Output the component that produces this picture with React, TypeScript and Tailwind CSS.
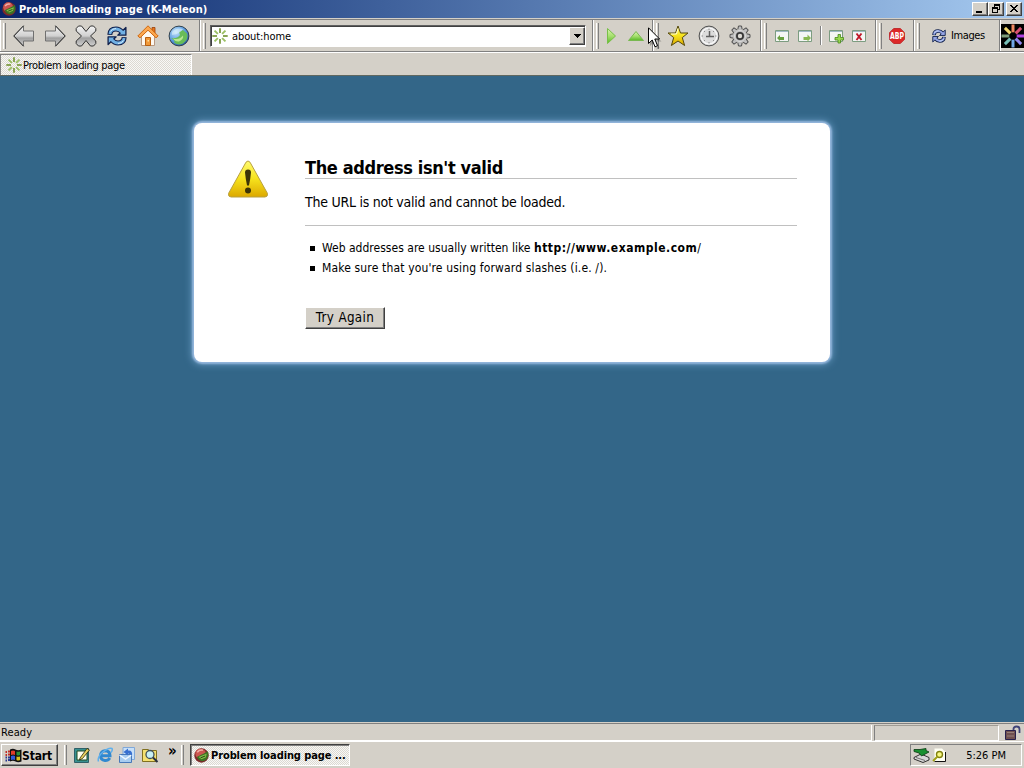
import type { ReactNode } from "react";

const UI_FONT = "font-['DejaVu_Sans_Condensed','DejaVu_Sans',sans-serif] [font-stretch:condensed]";

const DITHER = "bg-[repeating-conic-gradient(#f8f8f6_0_25%,#dcd9d2_0_50%)] bg-[length:2px_2px]";

const SPOKES = [0, 45, 90, 135, 180, 225, 270, 315];

const LOGO_COLOURS = ["#f08860", "#d85070", "#b040e0", "#9088f0", "#70a8e8", "#78c0b8", "#7c9c78", "#f0d870"];

function Grip({ className = "h-[26px]" }: { className?: string }) {
  return <div className={`w-[3px] shrink-0 border-l border-r border-l-white border-r-[#808080] bg-[#d4d0c8] ${className}`} />;
}

function Band({ className, children }: { className: string; children: ReactNode }) {
  return (
    <div className={`flex h-full shrink-0 items-center border-l border-r border-l-white border-r-[#808080] pl-[2px] ${className}`}>
      <Grip />
      {children}
    </div>
  );
}

function Cell({ className = "w-[31px]", children }: { className?: string; children: ReactNode }) {
  return <div className={`flex h-full shrink-0 items-center justify-center ${className}`}>{children}</div>;
}

// Ring of short strokes used as the page favicon
function Spinner() {
  return (
    <svg width="16" height="16" viewBox="0 0 16 16" className="shrink-0">
      {SPOKES.map((deg, i) => (
        <path
          key={deg}
          d="M8 0.3V5"
          stroke={i % 2 ? "#9abf62" : "#84a04c"}
          strokeWidth="1.9"
          transform={`rotate(${deg} 8 8)`}
        />
      ))}
    </svg>
  );
}

function KMeleonIcon({ size }: { size: number }) {
  return (
    <svg width={size} height={size} viewBox="0 0 16 16" className="shrink-0">
      <circle cx="8" cy="8" r="7.7" fill="#7c2a2a" />
      <circle cx="7" cy="6" r="5.6" fill="#cc5650" />
      <path d="M3.5 4.5Q6 1.5 9.5 2.5" stroke="#f0b0a8" strokeWidth="1.6" fill="none" />
      <path d="M3 9.5L7 7.5L10 6L14.8 3.5Q16.5 9 13 12.5Q9 15.5 5 12.5Z" fill="#3c7424" />
      <path d="M5 9.5L10 7.5L13.5 6L12.5 10L8 12Z" fill="#88c048" />
      <path d="M7 10.500L12 8.500" stroke="#1f3c14" strokeWidth="1" />
    </svg>
  );
}

function Gradients() {
  return (
    <svg width="0" height="0" className="absolute">
      <defs>
        <linearGradient id="metal" x1="0" y1="0" x2="0" y2="1">
          <stop offset="0" stopColor="#f4f4f4" />
          <stop offset="0.5" stopColor="#d0d0d0" />
          <stop offset="0.6" stopColor="#a0a0a0" />
          <stop offset="1" stopColor="#d0d0d0" />
        </linearGradient>
        <linearGradient id="green" x1="0" y1="0" x2="0" y2="1">
          <stop offset="0" stopColor="#d8f4b0" />
          <stop offset="0.5" stopColor="#a8e070" />
          <stop offset="1" stopColor="#58b828" />
        </linearGradient>
        <linearGradient id="gold" x1="0" y1="0" x2="0" y2="1">
          <stop offset="0" stopColor="#fffb70" />
          <stop offset="0.5" stopColor="#f6e21c" />
          <stop offset="1" stopColor="#dca800" />
        </linearGradient>
        <radialGradient id="globe" cx="0.35" cy="0.3" r="0.75">
          <stop offset="0" stopColor="#c4e4fc" />
          <stop offset="0.6" stopColor="#5c9ce0" />
          <stop offset="1" stopColor="#2858a8" />
        </radialGradient>
      </defs>
    </svg>
  );
}

function BackIcon() {
  return (
    <svg width="22" height="22" viewBox="0 0 22 22">
      <path d="M0.8 11L10.500 0.800V6H20.500V16H10.500V21.200Z" fill="url(#metal)" stroke="#707070" strokeLinejoin="round" />
      <path d="M10.500 0.800L0.800 11L10.500 21.200" fill="none" stroke="#303030" />
    </svg>
  );
}

function ForwardIcon() {
  return (
    <svg width="22" height="22" viewBox="0 0 22 22">
      <path d="M21.200 11L11.500 0.800V6H1.500V16H11.500V21.200Z" fill="url(#metal)" stroke="#707070" strokeLinejoin="round" />
      <path d="M11.500 0.800L21.200 11L11.500 21.200" fill="none" stroke="#303030" />
    </svg>
  );
}

function StopIcon() {
  return (
    <svg width="22" height="22" viewBox="0 0 22 22">
      <path
        d="M3.5 1H6.500L11 6.500L15.500 1H18.500L20.800 3.500V6L15.500 11L20.800 16V18.500L18.500 21H15.500L11 15.500L6.500 21H3.500L1.200 18.500V16L6.500 11L1.200 6V3.500Z"
        fill="url(#metal)"
        stroke="#303030"
        strokeLinejoin="round"
      />
    </svg>
  );
}

// Two curved arrows chasing each other: dark silhouette first, fill on top
function ReloadIcon({ size, fill }: { size: number; fill: string }) {
  return (
    <svg width={size} height={size} viewBox="0 0 20 20" className="shrink-0">
      {[0, 180].map((deg) => (
        <g key={deg} transform={`rotate(${deg} 10 10)`}>
          <path d="M2.800 8.800Q3 3 9 3Q12.500 3 15 6" fill="none" stroke="#10204c" strokeWidth="5" />
          <path d="M18.900 1.500V9.200H10.800Z" fill={fill} stroke="#10204c" strokeWidth="1.300" strokeLinejoin="round" />
          <path d="M2.900 8Q3.500 3 9 3Q12.500 3 15.500 6.500" fill="none" stroke={fill} strokeWidth="2.800" />
          <path d="M3.500 5.500Q5 2.500 9 2.500" fill="none" stroke="#dceefc" strokeWidth="0.900" />
        </g>
      ))}
    </svg>
  );
}

function HomeIcon() {
  return (
    <svg width="22" height="22" viewBox="0 0 22 22">
      <path d="M4.500 11V20.500H17.500V11L11 4Z" fill="#fdf8f0" stroke="#b89880" />
      <path d="M15 2.500H18V8L15 5Z" fill="#e87820" stroke="#984008" strokeWidth="0.800" />
      <path d="M11 0.800L0.800 11L3 12.800L11 5.200L19 12.800L21.200 11Z" fill="#fba850" stroke="#d06810" />
      <path d="M8.500 12.500H13.500V20.500H8.500Z" fill="#f09838" stroke="#b86010" />
      <path d="M10.500 15H12V16.500H10.500Z" fill="#ffe0a0" />
    </svg>
  );
}

function GlobeIcon() {
  return (
    <svg width="22" height="22" viewBox="0 0 22 22">
      <circle cx="11" cy="11" r="9.900" fill="url(#globe)" stroke="#30404c" />
      <path d="M3 13Q9 14 12 10L11 7L15 5L19 8.500Q21 14 15 18.500Q10 21 6 17.500Q8 16 3 13Z" fill="#68bc58" />
      <path d="M5 13.500Q11 15.500 15 10.500Q16 14 11 16.500Q7 17 5 13.500Z" fill="#b8e890" />
      <path d="M4 7Q8 2 15 4Q12 9 4 10Z" fill="#e0f4fc" opacity="0.550" />
    </svg>
  );
}

function StarIcon() {
  return (
    <svg width="22" height="22" viewBox="0 0 22 22">
      <path
        d="M11 1L13.500 8H21L15.300 12.600L17.600 20.500L11 16L4.400 20.500L6.700 12.600L1 8H8.500Z"
        fill="url(#gold)"
        stroke="#54480c"
        strokeLinejoin="round"
      />
      <path d="M11 3.500L9.500 9H4" stroke="#fffde0" fill="none" />
    </svg>
  );
}

function ClockIcon() {
  return (
    <svg width="22" height="22" viewBox="0 0 22 22">
      <circle cx="11" cy="11" r="9.900" fill="#c4c4c4" stroke="#505050" />
      <circle cx="11" cy="11" r="8" fill="#dcdcdc" stroke="#f8f8f8" strokeWidth="1.500" />
      <path d="M11 3.500V5M11 17V18.500M3.500 11H5M17 11H18.500M6 6L7 7M16 6L15 7M6 16L7 15M16 16L15 15" stroke="#909090" />
      <path d="M11.500 6V12M8 11.500H16" stroke="#606060" strokeWidth="1.500" />
    </svg>
  );
}

function GearIcon() {
  return (
    <svg width="22" height="22" viewBox="0 0 22 22">
      {SPOKES.map((deg) => (
        <path key={deg} d="M8.800 4.500L9.500 1H12.500L13.200 4.500" fill="#c0c0c0" stroke="#505050" transform={`rotate(${deg} 11 11)`} />
      ))}
      <circle cx="11" cy="11" r="6.700" fill="#b8b8b8" />
      <circle cx="11" cy="11" r="5.500" fill="none" stroke="#dcdcdc" />
      <circle cx="11" cy="11" r="3.100" fill="#dcdad4" stroke="#383838" strokeWidth="1.800" />
    </svg>
  );
}

function PageFrame({ children }: { children: ReactNode }) {
  return (
    <svg width="16" height="16" viewBox="0 0 16 16" className="shrink-0">
      <path d="M1.500 2.500H14.500V13.500H1.500Z" fill="#f4f6f4" stroke="#7c9c80" />
      <path d="M2 3.500H14" stroke="#a0b8c4" />
      {children}
    </svg>
  );
}

function Throbber() {
  return (
    <svg width="24" height="24" viewBox="0 0 24 24" className="shrink-0">
      <path d="M0 0H24V24H0Z" fill="#000000" />
      {SPOKES.map((deg, i) => (
        <path key={deg} d="M12 0.500V8.300" stroke={LOGO_COLOURS[i]} strokeWidth="3" transform={`rotate(${deg} 12 12)`} />
      ))}
    </svg>
  );
}

function CaptionButton({ children, className = "" }: { children: ReactNode; className?: string }) {
  return (
    <div className={`h-[14px] w-4 border border-b-[#404040] border-l-white border-r-[#404040] border-t-white bg-[#d4d0c8] shadow-[inset_-1px_-1px_0_#808080] ${className}`}>
      <svg width="14" height="12" viewBox="0 0 14 12" shapeRendering="crispEdges">
        {children}
      </svg>
    </div>
  );
}

function TitleBar() {
  return (
    <div className="flex h-[18px] shrink-0 items-center bg-linear-to-r from-[#0a246a] to-[#a6caf0] px-[2px]">
      <KMeleonIcon size={14} />
      <span className="ml-[3px] grow whitespace-nowrap pt-px text-[11px] font-bold leading-[17px] tracking-[0.07px] text-white">
        Problem loading page (K-Meleon)
      </span>
      <CaptionButton>
        <path d="M3 8H9V10H3Z" />
      </CaptionButton>
      <CaptionButton>
        <path d="M5 1H11V3H5ZM10 3H11V7H9V6H10ZM5 3H6V4H5ZM3 4H9V6H3ZM3 6H4V10H3ZM8 6H9V10H8ZM3 9H9V10H3Z" />
      </CaptionButton>
      <CaptionButton className="ml-[2px]">
        <path d="M3 2H5V3H6V4H8V3H9V2H11V3H10V4H9V5H8V6H9V7H10V8H11V9H9V8H8V7H6V8H5V9H3V8H4V7H5V6H6V5H5V4H4V3H3Z" />
      </CaptionButton>
    </div>
  );
}

function Toolbar() {
  return (
    <div className="flex h-8 shrink-0 border-b border-[#808080]">
      <Band className="w-[200px]">
        <div className="flex h-full pl-[2px]">
          <Cell><BackIcon /></Cell>
          <Cell><ForwardIcon /></Cell>
          <Cell><StopIcon /></Cell>
          <Cell><ReloadIcon size={20} fill="#70b0e4" /></Cell>
          <Cell><HomeIcon /></Cell>
          <Cell><GlobeIcon /></Cell>
        </div>
      </Band>
      <Band className="w-[393px]">
        <div className="ml-[4px] flex h-[22px] w-[376px] items-center border border-b-white border-l-[#606060] border-r-white border-t-[#606060] bg-white pl-px shadow-[inset_1px_1px_0_#404040]">
          <Spinner />
          <span className="ml-1 grow pt-[2px] text-[11px] leading-4 tracking-[-0.1px]">about:home</span>
          <div className="flex h-[18px] w-4 items-center justify-center border border-b-[#404040] border-l-white border-r-[#404040] border-t-white bg-[#d4d0c8] shadow-[inset_-1px_-1px_0_#808080]">
            <svg width="7" height="4" viewBox="0 0 7 4" shapeRendering="crispEdges">
              <path d="M0 0H7V1H6V2H5V3H4V4H3V3H2V2H1V1H0Z" />
            </svg>
          </div>
        </div>
      </Band>
      <Band className="w-[60px]">
        <Cell className="ml-[2px] w-[20px]">
          <svg width="11" height="18" viewBox="0 0 11 18">
            <path d="M1.500 1.500L9.500 9L1.500 16.500Z" fill="url(#green)" stroke="#78c048" />
          </svg>
        </Cell>
        <Cell className="ml-[6px] w-[18px]">
          <svg width="18" height="12" viewBox="0 0 18 12">
            <path d="M1.500 10.500L9 1.500L16.500 10.500Z" fill="url(#green)" stroke="#78b850" />
          </svg>
        </Cell>
      </Band>
      <Band className="w-[108px]">
        <div className="flex h-full pl-[3px]">
          <Cell><StarIcon /></Cell>
          <Cell><ClockIcon /></Cell>
          <Cell><GearIcon /></Cell>
        </div>
      </Band>
      <Band className="w-[115px]">
        <Cell className="ml-[7px] w-4">
          <PageFrame>
            <path d="M3 10L6 7V9H10V12H6V13Z" fill="#68a040" />
          </PageFrame>
        </Cell>
        <Cell className="ml-[7px] w-4">
          <PageFrame>
            <path d="M14 10L10.500 6.500V9H6.500V12H10.500V13.500Z" fill="#88b850" />
          </PageFrame>
        </Cell>
        <div className="ml-[7px] h-[19px] w-[2px] border-l border-r border-l-[#808080] border-r-white" />
        <Cell className="ml-[6px] w-4">
          <PageFrame>
            <path d="M10 6.500H12.500V9.500H15.500V12H12.500V15H10V12H7V9.500H10Z" fill="#98d850" stroke="#488818" strokeWidth="0.800" />
          </PageFrame>
        </Cell>
        <Cell className="ml-[7px] w-4">
          <PageFrame>
            <path d="M5.500 5.500L10.500 12M10.500 5.500L5.500 12" stroke="#c01828" strokeWidth="1.900" />
          </PageFrame>
        </Cell>
      </Band>
      <Band className="w-[38px]">
        <Cell className="ml-[7px] w-4">
          <svg width="16" height="16" viewBox="0 0 16 16">
            <path d="M4.700 0.500H11.300L15.500 4.700V11.300L11.300 15.500H4.700L0.500 11.300V4.700Z" fill="#dc2828" stroke="#c03030" />
            <text x="8" y="11" textAnchor="middle" textLength="14" lengthAdjust="spacingAndGlyphs" className="fill-white text-[8px] font-bold">
              ABP
            </text>
          </svg>
        </Cell>
      </Band>
      <Band className="w-[86px]">
        <div className="ml-[12px] flex items-center pt-px">
          <ReloadIcon size={14} fill="#98a8e8" />
          <span className="ml-[5px] text-[11px] leading-4 tracking-[-0.400px]">Images</span>
        </div>
      </Band>
      <div className="flex w-6 items-center border-l border-white">
        <Throbber />
      </div>
    </div>
  );
}

function TabBar() {
  return (
    <div className="flex h-6 shrink-0 border-b border-t border-b-[#606860] border-t-white">
      <div className={`mt-px flex h-[21px] w-[192px] items-center border-l border-r border-t border-l-[#808080] border-r-white border-t-[#808080] pl-[5px] ${DITHER}`}>
        <Spinner />
        <span className="ml-px whitespace-nowrap pt-[2px] text-[11px] leading-4 tracking-[-0.300px]">Problem loading page</span>
      </div>
    </div>
  );
}

function WarningIcon() {
  return (
    <svg width="42" height="38" viewBox="0 0 42 38" className="shrink-0">
      <path
        d="M19 2.200Q21 -0.300 23 2.200L40.500 33.500Q41 36.800 38 37H4Q1 36.800 1.500 33.500Z"
        fill="url(#gold)"
        stroke="#b8a040"
      />
      <path d="M18 12.500Q18 9.500 21 9.500Q24 9.500 24 12.500Q23.500 18 22 25.500H20Q18.500 18 18 12.500Z" fill="#3c3408" />
      <circle cx="21" cy="30.500" r="3" fill="#3c3408" />
    </svg>
  );
}

function ErrorPage() {
  return (
    <main className="flex grow justify-center bg-[#336688] pt-[47px]">
      <section className="flex h-[239px] w-[636px] rounded-[8px] bg-white px-[33px] shadow-[0_0_2px_2px_#94b6dc,0_0_7px_3px_#5f92b8]">
        <div className="w-[78px] shrink-0 pt-[37px]">
          <WarningIcon />
        </div>
        <div className="grow">
          <h1 className="mt-[33px] h-[23px] whitespace-nowrap border-b border-[#c0c0c0] text-[18px] font-bold leading-[24px] tracking-[-0.370px]">
            The address isn't valid
          </h1>
          <p className="mt-[13px] whitespace-nowrap text-[14px] leading-5 tracking-[-0.250px]">
            The URL is not valid and cannot be loaded.
          </p>
          <ul className="mt-[13px] border-t border-[#c0c0c0] pt-[12px] text-[12px] leading-5">
            <li className="flex items-center whitespace-nowrap">
              <span className="ml-[5px] mr-[7px] size-[5px] bg-black" />
              <span className="tracking-[0.020px]">Web addresses are usually written like&nbsp;</span>
              <b className="tracking-[0.520px]">http://www.example.com</b>/
            </li>
            <li className="flex items-center whitespace-nowrap">
              <span className="ml-[5px] mr-[7px] size-[5px] bg-black" />
              <span className="tracking-[0.150px]">Make sure that you're using forward slashes (i.e. /).</span>
            </li>
          </ul>
          <button
            type="button"
            className="mt-[29px] block h-[22px] w-[80px] whitespace-nowrap border border-b-[#404040] border-l-white border-r-[#404040] border-t-white bg-[#d4d0c8] text-[13.300px] leading-5 tracking-[0.350px] shadow-[inset_-1px_-1px_0_#808080]"
          >
            Try Again
          </button>
        </div>
      </section>
    </main>
  );
}

function StatusBar() {
  return (
    <div className="flex h-[18px] shrink-0 items-center border-t border-[#808080]">
      <div className="flex h-4 w-[872px] items-center border-b border-r border-white pl-px pt-[2px] text-[11px] leading-4 tracking-[0.100px]">Ready</div>
      <div className="ml-[2px] h-4 w-[125px] border border-b-white border-l-[#808080] border-r-white border-t-[#a09c94]" />
      <svg width="16" height="16" viewBox="0 0 16 16" className="ml-[6px]">
        <path d="M8.500 6V4Q8.500 1.500 11.500 1.500Q14.500 1.500 14.500 4V8" fill="none" stroke="#404478" strokeWidth="1.800" />
        <path d="M0.500 5.500H10.500V14.500H0.500Z" fill="#705050" stroke="#28204c" />
        <path d="M2 7.500H9M2 11H9" stroke="#988078" />
      </svg>
    </div>
  );
}

function Taskbar() {
  return (
    <div className="flex h-[27px] shrink-0 items-center border-t border-white pl-px pr-[2px]">
      <div className="flex h-[22px] w-[57px] items-center border border-b-[#404040] border-l-white border-r-[#404040] border-t-white pl-[3px] shadow-[inset_-1px_-1px_0_#808080]">
        <svg width="17" height="15" viewBox="0 0 17 15" className="shrink-0">
          <path d="M5 1.500Q8 0 10.500 1.500Q13 3 16.500 1.500V13.500Q13 15 10.500 13.500Q8 12 5 13.500Z" fill="#101010" />
          <path d="M6 3Q8 2 10 3V7Q8 6 6 7Z" fill="#e03c28" />
          <path d="M11.500 3.500Q13 4.200 15 3.500V7Q13 8 11.500 7Z" fill="#289038" />
          <path d="M6 8Q8 7 10 8V12Q8 11 6 12Z" fill="#3058d8" />
          <path d="M11.500 8.500Q13 9.200 15 8.500V12Q13 13 11.500 12Z" fill="#d8c020" />
          <path d="M0.500 4H2M3 3.500H5M0.500 7H2M3 6.500H5" stroke="#c03028" strokeWidth="1.800" />
          <path d="M0.500 9.500H2M3 9.500H5M0.500 12.500H2M3 12H5" stroke="#283890" strokeWidth="1.800" />
        </svg>
        <span className="whitespace-nowrap pt-px text-[12px] font-bold leading-4 tracking-[-0.150px]">Start</span>
      </div>
      <Grip className="ml-[6px] h-[20px]" />
      <svg width="17" height="16" viewBox="0 0 17 16" className="ml-[7px] shrink-0">
        <path d="M0.500 1.500H14.500V15.500H0.500Z" fill="#389090" stroke="#306068" />
        <path d="M3 4H13V13H3Z" fill="#fffff0" stroke="#204820" />
        <path d="M6 11L13 1.500L15.500 3L8.500 11.500L5.500 13Z" fill="#e8d060" stroke="#282808" strokeWidth="0.800" />
      </svg>
      <svg width="16" height="16" viewBox="0 0 16 16" className="ml-[6px] shrink-0">
        <path d="M12.800 11Q11 13.800 8 13.600Q3.500 13 3.500 8.800Q3.800 4 8.300 3.700Q13 4 13 8.800H5" fill="none" stroke="#3088d0" strokeWidth="3" />
        <path d="M1.500 14.500Q0 10 6 5Q12 0 15 1.500Q16 3 14 5.500" fill="none" stroke="#60b0ec" strokeWidth="1.500" />
      </svg>
      <svg width="16" height="16" viewBox="0 0 16 16" className="ml-[6px] shrink-0">
        <path d="M4 0.500H15.500V12.500H4Z" fill="#c8e0f8" stroke="#80a8d8" />
        <path d="M0.500 7.500H12.500V15.500H0.500Z" fill="#a8ccf0" stroke="#4878b8" />
        <path d="M0.500 8L6.500 12L12.500 8" fill="none" stroke="#f0f8ff" strokeWidth="1.500" />
        <path d="M4.500 5L9 1.500V3.500Q14 3 13 9Q12 6.500 9 6.500V8.500Z" fill="#3870d0" />
      </svg>
      <svg width="17" height="16" viewBox="0 0 17 16" className="ml-[7px] shrink-0">
        <path d="M0.500 2.500H6L7.500 3.500H14.500V14.500H0.500Z" fill="#f4e070" stroke="#807020" />
        <circle cx="8" cy="7.500" r="4" fill="#c8f0f4" stroke="#405058" strokeWidth="1.300" />
        <path d="M11 10.500L15.500 15" stroke="#283040" strokeWidth="2" />
      </svg>
      <span className="ml-[9px] w-[13px] self-start text-[15px] font-bold leading-[19px]">»</span>
      <Grip className="h-[20px]" />
      <div className={`ml-[6px] flex h-[22px] w-[160px] shrink-0 items-center border border-b-white border-l-[#404040] border-r-white border-t-[#404040] pl-[3px] shadow-[inset_1px_1px_0_#808080] ${DITHER}`}>
        <KMeleonIcon size={15} />
        <span className="ml-[2px] whitespace-nowrap pt-[2px] text-[11px] font-bold leading-4 tracking-[-0.100px]">Problem loading page ...</span>
      </div>
      <div className="ml-auto flex h-[22px] w-[112px] items-center border border-b-white border-l-[#808080] border-r-white border-t-[#808080] pl-[2px]">
        <svg width="17" height="16" viewBox="0 0 17 16" className="shrink-0">
          <path d="M1 10.500L8 7L16 10.500V13L10 15.500L1 12Z" fill="#d8d8d8" stroke="#303030" />
          <path d="M1 2.500H7L13 1.500V3.500L16 5L8.500 9L6 6L1 4.500Z" fill="#189030" stroke="#083810" strokeWidth="0.800" />
          <path d="M3 10.500L12 13.500" stroke="#707070" />
        </svg>
        <svg width="15" height="16" viewBox="0 0 15 16" className="ml-[2px] shrink-0">
          <path d="M2.500 1.500H10L13.500 5V14.500H2.500Z" fill="#fffff4" />
          <path d="M13.500 5V14.500H2.500" fill="none" stroke="#101010" />
          <circle cx="7.500" cy="7.500" r="3" fill="#f8f880" stroke="#808010" strokeWidth="1.400" />
          <path d="M5.500 9.500L1 14" stroke="#a0a018" strokeWidth="2" />
        </svg>
        <span className="ml-auto mr-[15px] whitespace-nowrap pt-[2px] text-[11px] leading-4">5:26 PM</span>
      </div>
    </div>
  );
}

function Cursor() {
  return (
    <svg width="14" height="24" viewBox="0 0 14 24" className="absolute left-[648px] top-[27px]">
      <path d="M2 3V19L5.500 15.500L8.500 22.500L11.500 21L8.800 14.500H13.500Z" fill="#000000" opacity="0.250" />
      <path d="M0.500 0.800V16.500L4.200 13L7 19.800L9.500 18.700L6.800 12H11.600Z" fill="#ffffff" stroke="#000000" />
    </svg>
  );
}

export default function App() {
  return (
    <div className={`relative flex h-[768px] w-[1024px] flex-col overflow-hidden bg-[#d4d0c8] text-black ${UI_FONT}`}>
      <Gradients />
      <TitleBar />
      <div className="h-[2px] shrink-0 border-b border-[#808080]" />
      <Toolbar />
      <TabBar />
      <ErrorPage />
      <div className="h-px shrink-0 bg-[#d4d0c8]" />
      <StatusBar />
      <Taskbar />
      <Cursor />
    </div>
  );
}
